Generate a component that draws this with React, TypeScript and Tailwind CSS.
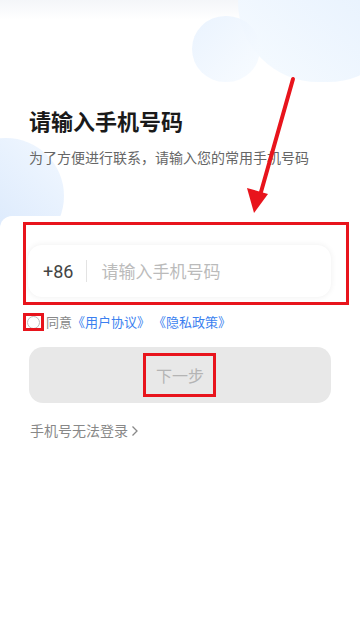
import React from 'react';

const RED = '#e8141c';

export default function App() {
  return (
    <div
      className="relative w-[360px] h-[620px] overflow-hidden bg-white"
      style={{ fontFamily: '"Noto Sans CJK SC", "Noto Sans", Roboto, sans-serif' }}
    >
      {/* 背景装飾 */}
      <div className="absolute left-0 top-0 w-full h-[20px] bg-gradient-to-b from-[#f4f6f9] to-white" />
      <div className="absolute left-[238px] top-[-78px] w-[170px] h-[160px] rounded-full bg-gradient-to-bl from-[#e2eefd] to-[#f6fbff]" />
      <div className="absolute left-[192px] top-[16px] w-[68px] h-[66px] rounded-full bg-gradient-to-br from-[#e8f2fe] to-[#f7fbff] opacity-90" />
      <div className="absolute left-[-52px] top-[138px] w-[116px] h-[116px] rounded-full bg-gradient-to-bl from-[#f2f8ff] to-[#d3e4fb]" />

      {/* ヘッダー */}
      <div className="relative px-[29px] pt-[105px]">
        <h1 className="text-[22px] leading-[30px] font-bold text-[#1a1a1a]">请输入手机号码</h1>
        <p className="mt-[12px] text-[14px] leading-[20px] text-[#666666]">
          为了方便进行联系，请输入您的常用手机号码
        </p>
      </div>

      {/* カード */}
      <div className="relative mt-[49px] h-[420px] rounded-tl-[12px] bg-white px-[28px] pt-[29px]">
        <div className="flex h-[52px] w-[303px] items-center rounded-[14px] bg-white pl-[15px] shadow-[0_0_6px_rgba(0,0,0,0.07)]">
          <span className="text-[18px] text-[#444444]" style={{ fontFamily: 'Roboto, sans-serif' }}>+86</span>
          <span className="ml-[13px] h-[22px] w-px bg-[#e3e3e3]" />
          <span className="ml-[14px] text-[17px] text-[#bbbbbb]">请输入手机号码</span>
        </div>

        <div className="mt-[16px] flex items-center text-[13px] leading-[18px]">
          <span className="ml-[-1px] flex h-[13px] w-[13px] items-center justify-center rounded-full border border-[#bdbdbd] bg-white" />
          <span className="ml-[6px] text-[#888888]">同意</span>
          <span className="text-[#3b7ff0]">《用户协议》 《隐私政策》</span>
        </div>

        <div className="mt-[16px] flex h-[56px] w-[302px] items-center justify-center rounded-[14px] bg-[#e8e8e8] ml-[1px]">
          <span className="text-[16px] text-[#b4b4b4]">下一步</span>
        </div>

        <div className="mt-[17px] ml-[2px] flex items-center text-[14px] text-[#888888]">
          <span>手机号无法登录</span>
          <svg className="ml-[3px]" width="8" height="12" viewBox="0 0 8 12" fill="none">
            <path d="M1.5 1.5L6 6L1.5 10.5" stroke="#888888" strokeWidth="1.3" />
          </svg>
        </div>

        {/* 注釈の赤枠 */}
        <div className="absolute left-[23px] top-[6px] h-[83px] w-[326px] border-[3px]" style={{ borderColor: RED }} />
        <div className="absolute left-[23px] top-[97px] h-[18px] w-[21px] border-[3px]" style={{ borderColor: RED }} />
        <div className="absolute left-[143px] top-[137px] h-[44px] w-[73px] border-[3px]" style={{ borderColor: RED }} />
      </div>

      {/* 注釈の矢印 */}
      <svg className="absolute left-0 top-0" width="360" height="620" viewBox="0 0 360 620">
        <line x1="293" y1="79" x2="261" y2="192" stroke={RED} strokeWidth="4" strokeLinecap="round" />
        <polygon points="254,213 247,188 268,194" fill={RED} />
      </svg>
    </div>
  );
}
